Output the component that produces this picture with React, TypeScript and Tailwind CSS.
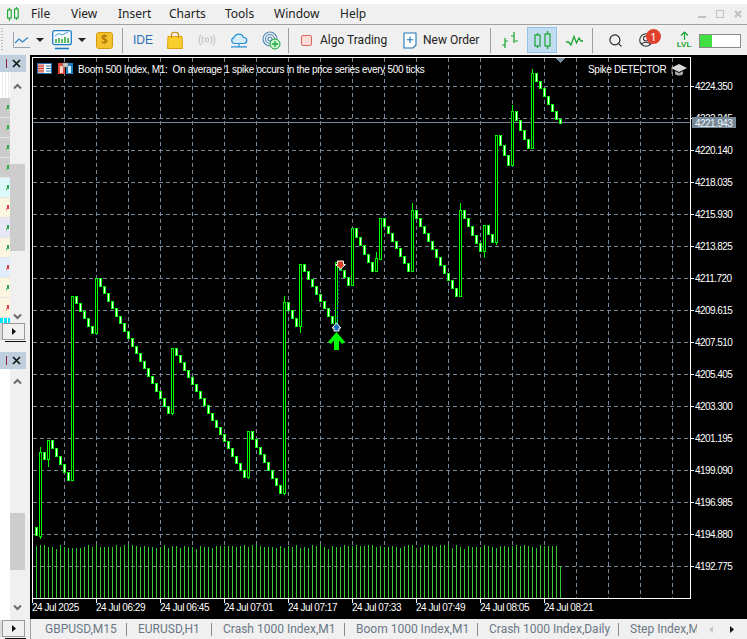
import React from 'react';
import { Search } from 'lucide-react';

const ui = { fontFamily: '"Noto Sans", sans-serif' };
const narrow = { fontFamily: 'Roboto, sans-serif' };
const chartFont = '"Liberation Sans", sans-serif';

// [x, top, bottom, wickTop, wickBottom]
const spikes: number[][] = [
  [40, 452, 536, 447, 539],
  [48, 440, 459, 440, 467],
  [72, 296, 480, 296, 480],
  [96, 278, 333, 278, 333],
  [172, 348, 413, 348, 415],
  [248, 431, 477, 431, 479],
  [284, 302, 493, 296, 495],
  [300, 264, 326, 264, 333],
  [336, 262, 323, 262, 323],
  [352, 228, 285, 228, 285],
  [376, 258, 271, 252, 271],
  [380, 218, 259, 218, 259],
  [412, 210, 271, 203, 271],
  [460, 210, 296, 203, 296],
  [484, 225, 251, 225, 258],
  [496, 135, 242, 135, 245],
  [512, 111, 165, 105, 165],
  [532, 73, 148, 69, 148],
];

const bears: number[][] = [[36, 527, 535]];
spikes.forEach((s, i) => {
  const next = spikes[i + 1];
  const endX = next ? next[0] - 4 : 556;
  const endY = next ? next[2] : 119;
  const n = Math.round((endX - s[0]) / 4);
  for (let k = 0; k < n; k++) {
    const step = (endY - s[1]) / n;
    bears.push([s[0] + 4 + k * 4, s[1] + k * step, s[1] + (k + 1) * step]);
  }
});
bears.push([560, 119, 123]);

const volumeOffsets =
  '1002240233332020222202000121223203113122412231111121020012223131203230102412201101100212212310042001200030241222012311210101230';

const prices = [
  ['4224.350', 86], ['4222.245', 118], ['4220.140', 150], ['4218.035', 182], ['4215.930', 214], ['4213.825', 246],
  ['4211.720', 278], ['4209.615', 310], ['4207.510', 342], ['4205.405', 374], ['4203.300', 406], ['4201.195', 438],
  ['4199.090', 470], ['4196.985', 502], ['4194.880', 534], ['4192.775', 566],
] as [string, number][];

const times = ['24 Jul 2025', '24 Jul 06:29', '24 Jul 06:45', '24 Jul 07:01', '24 Jul 07:17', '24 Jul 07:33', '24 Jul 07:49', '24 Jul 08:05', '24 Jul 08:21'];

const menu = [
  ['File', 'w-[40px]'], ['View', 'w-[47px]'], ['Insert', 'w-[51px]'], ['Charts', 'w-[56px]'],
  ['Tools', 'w-[49px]'], ['Window', 'w-[66px]'], ['Help', 'w-[40px]'],
];

const tabs = [
  ['GBPUSD,M15', 'w-[96px]'], ['EURUSD,H1', 'w-[85px]'], ['Crash 1000 Index,M1', 'w-[133px]'],
  ['Boom 1000 Index,M1', 'w-[133px]'], ['Crash 1000 Index,Daily', 'w-[141px]'],
];

const Chevron = ({ up }: { up?: boolean }) => (
  <svg width="9" height="7" viewBox="0 0 9 7" className={up ? '' : 'rotate-180'}>
    <path d="M1 5.500 4.500 2 8 5.500" fill="none" stroke="#6b6b6b" strokeWidth="2" />
  </svg>
);

const PanelHeader = () => (
  <div className="h-[17px] w-[26px] bg-[#bfcfde] flex items-center justify-end gap-[5px] pr-[5px] shrink-0">
    <div className="w-px h-[9px] bg-[#8a1f3a]" />
    <svg width="9" height="9" viewBox="0 0 9 9"><path d="M1 1 8 8M8 1 1 8" stroke="#111" strokeWidth="1.600" /></svg>
  </div>
);

const HScroll = () => (
  <div className="h-[19px] w-[26px] ml-[2px] relative shrink-0">
    <div className="h-[17px] w-[23px] border border-[#9a9a9a] bg-[#f0f0f0] shadow-[-3px_0_0_#dcdcdc] flex items-center justify-center">
      <svg width="4" height="7" viewBox="0 0 4 7"><path d="M0 0 4 3.500 0 7Z" fill="#111" /></svg>
    </div>
    <div className="absolute left-[3px] bottom-0 w-[21px] h-px bg-[#111]" />
  </div>
);

const rowColors = [
  'bg-[#cccccc]', 'bg-[#cccccc]', 'bg-[#cccccc]', 'bg-[#cccccc]', 'bg-[#dcf8fa]', 'bg-[#fcf5e0]',
  'bg-[#e6e8f7]', 'bg-[#fcf5e0]', 'bg-[#e2eefb]', 'bg-[#fcf5e0]', 'bg-[#fcf5e0]',
];

const LeftColumn = () => (
  <div className="w-[30px] shrink-0 bg-[#f0f0f0] flex flex-col">
    <PanelHeader />
    <div className="h-[251px] flex shrink-0">
      <div className="w-[10px] flex flex-col">
        <div className="h-[26px] bg-[repeating-linear-gradient(90deg,#ffffff_0px,#ffffff_2px,#ececec_2px,#ececec_3px)]" />
        {rowColors.map((c, i) => (
          <div key={i} className={`h-[20px] relative ${c} border-b border-[#e4e4e4]`}>
            <div className={`absolute right-[1px] top-[7px] w-[2px] h-[4px] ${i === 5 || i === 8 || i === 10 ? 'bg-[#d84040]' : 'bg-[#2ea84a]'}`} />
            <div className={`absolute right-[3px] top-[10px] w-px h-[3px] ${i === 5 || i === 8 || i === 10 ? 'bg-[#e89a9a]' : 'bg-[#7cc98e]'}`} />
          </div>
        ))}
        <div className="h-[5px] bg-[repeating-linear-gradient(90deg,#00e5ff_0px,#00e5ff_3px,#ffffff_3px,#ffffff_4px)]" />
      </div>
      <div className="flex-1 flex flex-col pr-[5px]">
        <div className="h-[26px] pt-[11px] flex justify-center"><Chevron up /></div>
        <div className="mt-[66px] h-[87px] bg-[#cdcdcd]" />
        <div className="mt-[62px] flex justify-center"><Chevron /></div>
      </div>
    </div>
    <HScroll />
    <div className="h-[10px] shrink-0" />
    <PanelHeader />
    <div className="flex-1 flex min-h-0">
      <div className="w-[10px] bg-white" />
      <div className="flex-1 flex flex-col pr-[5px]">
        <div className="pt-[9px] flex justify-center"><Chevron up /></div>
        <div className="mt-[128px] h-[57px] bg-[#cdcdcd]" />
        <div className="mt-[34px] flex justify-center"><Chevron /></div>
      </div>
    </div>
    <HScroll />
  </div>
);

const Sep = ({ cls }: { cls: string }) => <div className={`w-px h-[25px] bg-[#a0a0a0] shrink-0 ${cls}`} />;

const Caret = ({ cls }: { cls: string }) => (
  <svg width="8" height="4" viewBox="0 0 8 4" className={`shrink-0 ${cls}`}><path d="M0 0H8L4 4Z" fill="#222" /></svg>
);

const Toolbar = () => (
  <div className="h-[30px] bg-[#f0f0f0] flex items-center shrink-0 text-[#222]" style={ui}>
    <div className="w-[2px] h-[24px] ml-[1px] shrink-0 bg-[repeating-linear-gradient(180deg,#bdbdbd_0px,#bdbdbd_1px,transparent_1px,transparent_3px)]" />
    {/* line chart */}
    <svg width="17" height="16" viewBox="0 0 17 16" className="ml-[10px] shrink-0">
      <path d="M.5 0V15.500H17" fill="none" stroke="#9aa5b1" />
      <path d="M2 11 6 7l3.500 3L15 5.500" fill="none" stroke="#2f86c9" strokeWidth="1.200" />
    </svg>
    <Caret cls="ml-[6px]" />
    {/* chart monitor */}
    <svg width="20" height="20" viewBox="0 0 20 20" className="ml-[8px] shrink-0">
      <rect x=".7" y=".7" width="18.600" height="14" rx="2" fill="#f7fbfe" stroke="#1f7fc4" strokeWidth="1.300" />
      <path d="M3 6 7 3.500l3 1.500 6-3" fill="none" stroke="#4a9fd8" />
      <path d="M4 13V9M7 13V8M10 13V9M13 13V7M16 13V8" stroke="#29a82f" strokeWidth="1.500" />
      <path d="M3 18.500H17" stroke="#1f7fc4" strokeWidth="1.600" />
    </svg>
    <Caret cls="ml-[6px]" />
    {/* signals */}
    <div className="ml-[10px] w-[17px] h-[17px] rounded-[3px] bg-[#f4c430] border border-[#d99a10] flex items-center justify-center text-[12px] font-bold text-[#b87a08] shrink-0">$</div>
    <Sep cls="ml-[9px]" />
    <div className="ml-[10px] w-[19px] text-[12px] leading-none text-[#2a70b8] shrink-0" style={{ fontFamily: chartFont }}>IDE</div>
    {/* market bag */}
    <svg width="16" height="18" viewBox="0 0 16 18" className="ml-[15px] shrink-0">
      <path d="M1 5.500H15L15.500 17.500H.5Z" fill="#f8cf2c" stroke="#e0a010" />
      <path d="M4.500 7V3.500C4.500 .5 11.500 .5 11.500 3.500V7" fill="none" stroke="#c98a10" strokeWidth="1.200" />
    </svg>
    {/* signal (disabled) */}
    <svg width="18" height="12" viewBox="0 0 18 12" className="ml-[15px] shrink-0" fill="none" stroke="#c4c4c4" strokeWidth="1.200">
      <circle cx="9" cy="6" r="1.800" />
      <path d="M5.500 2.500a5 5 0 0 0 0 7M12.500 2.500a5 5 0 0 1 0 7M3 .8a8 8 0 0 0 0 10.400M15 .8a8 8 0 0 1 0 10.400" />
    </svg>
    {/* cloud */}
    <svg width="18" height="15" viewBox="0 0 18 15" className="ml-[14px] shrink-0">
      <path d="M4.500 10.500A3 3 0 0 1 4 4.600 5 5 0 0 1 13.500 4.500 3 3 0 0 1 14 10.500Z" fill="#d5ecfb" stroke="#2a8fd0" strokeWidth="1.200" />
      <path d="M9 10.500V13.500M1 13.800H17" stroke="#2a8fd0" strokeWidth="1.200" />
    </svg>
    {/* vps */}
    <svg width="19" height="19" viewBox="0 0 19 19" className="ml-[14px] shrink-0">
      <g fill="none" stroke="#4e89b5" strokeWidth="1.100">
        <circle cx="8" cy="8" r="7" />
        <circle cx="8" cy="8" r="4.500" />
        <circle cx="8" cy="8" r="2" />
      </g>
      <circle cx="13" cy="13" r="5" fill="#c7f5cd" stroke="#1fa53a" />
      <path d="M13 10V16M10 13H16" stroke="#1fa53a" strokeWidth="1.300" />
    </svg>
    <Sep cls="ml-[7px]" />
    <div className="ml-[12px] w-[11px] h-[11px] rounded-[2px] bg-[#fbdcd8] border border-[#d9675c] shrink-0" />
    <div className="ml-[8px] w-[83px] text-[12px] shrink-0 whitespace-nowrap" style={narrow}>Algo Trading</div>
    <svg width="14" height="17" viewBox="0 0 14 17" className="shrink-0">
      <path d="M1 1H13V13L10 16H1Z" fill="#fff" stroke="#2477b5" strokeWidth="1.100" />
      <path d="M7 4.500V11M3.800 7.800H10.200" stroke="#2477b5" strokeWidth="1.100" />
    </svg>
    <div className="ml-[6px] w-[67px] text-[12px] shrink-0 whitespace-nowrap" style={narrow}>New Order</div>
    <Sep cls="" />
    {/* bars */}
    <svg width="18" height="18" viewBox="0 0 18 18" className="ml-[10px] shrink-0" stroke="#16a52e" strokeWidth="1.200" fill="none">
      <path d="M4 7V17M1 14H4M4 10H7M13 1V12M10 5H13M13 10H17" />
    </svg>
    {/* candles, selected */}
    <div className="ml-[8px] w-[30px] h-[26px] bg-[#c3dcf0] border border-[#8fc3ea] flex items-center justify-center shrink-0">
      <svg width="17" height="18" viewBox="0 0 17 18" stroke="#16a52e" strokeWidth="1.200" fill="none">
        <path d="M3.500 2V4M3.500 15V17M13.500 0V3M13.500 15V18" />
        <rect x="1" y="4" width="5" height="11" />
        <rect x="11" y="3" width="5" height="12" />
      </svg>
    </div>
    {/* line */}
    <svg width="17" height="11" viewBox="0 0 17 11" className="ml-[9px] shrink-0" fill="none" stroke="#16a52e" strokeWidth="1.300">
      <path d="M0 7H2.500L5 10 8 1.500 10.500 8 13 3 15 6H17" />
    </svg>
    <Sep cls="ml-[9px]" />
    <Search size={15} strokeWidth={1.800} className="ml-[15px] shrink-0 text-[#222]" />
    {/* profile + badge */}
    <div className="ml-[16px] relative w-[14px] h-[14px] shrink-0">
      <svg width="14" height="14" viewBox="0 0 14 14" fill="none" stroke="#333" strokeWidth="1.100">
        <circle cx="7" cy="7" r="6.300" />
        <circle cx="7" cy="5.500" r="2.500" />
        <path d="M2.500 11.500C4 8.500 10 8.500 11.500 11.500" />
      </svg>
      <div className="absolute -top-[4px] left-[7px] w-[15px] h-[15px] rounded-full bg-[#e0402c] text-white text-[11px] leading-[15px] text-center">1</div>
    </div>
    {/* level */}
    <div className="ml-[24px] w-[14px] h-[18px] flex flex-col items-center shrink-0">
      <svg width="9" height="9" viewBox="0 0 9 9" fill="none" stroke="#16a52e" strokeWidth="1.200"><path d="M4.500 9V1M1 4.500 4.500 1 8 4.500" /></svg>
      <div className="text-[8px] leading-[9px] font-semibold text-[#16a52e]" style={{ fontFamily: chartFont }}>LVL</div>
    </div>
    <div className="ml-[8px] mt-[1px] w-[42px] h-[14px] border border-[#8a8a8a] bg-white shrink-0 flex">
      <div className="w-[12px] bg-[#3fe03f]" />
    </div>
  </div>
);

const Chart = () => (
  <svg width="717" height="564" viewBox="30 55 717 564" className="block shrink-0" shapeRendering="crispEdges" style={{ fontFamily: chartFont }}>
    <rect x="30" y="55" width="717" height="564" fill="#000" />
    {/* grid */}
    {prices.map(([, y]) => (
      <line key={y} x1="33" x2="690" y1={y + 0.5} y2={y + 0.5} stroke="#778899" strokeDasharray="4 3" />
    ))}
    {Array.from({ length: 20 }, (_, i) => 64 + i * 32).map((x) => (
      <line key={x} x1={x + 0.5} x2={x + 0.5} y1="58" y2="598" stroke="#778899" strokeDasharray="4 3" />
    ))}
    <line x1="33" x2="690" y1="122.500" y2="122.500" stroke="#778899" />
    {/* frame */}
    <rect x="32.500" y="57.500" width="658" height="541" fill="none" stroke="#fff" />
    {/* volumes */}
    {bears.concat(spikes).map((c) => {
      const idx = (c[0] - 36) / 4;
      const top = c[0] === 560 ? 566 : 545 + Number(volumeOffsets[idx] ?? 1);
      return <line key={c[0]} x1={c[0] + 0.5} x2={c[0] + 0.5} y1={top} y2="598" stroke="#32cd32" />;
    })}
    {/* candles */}
    {spikes.map((s) => (
      <g key={s[0]}>
        <line x1={s[0] + 0.5} x2={s[0] + 0.5} y1={s[3]} y2={s[4]} stroke="#00ff00" />
        <rect x={s[0] - 0.5} y={s[1] + 0.5} width="2" height={s[2] - s[1]} fill="#000" stroke="#00ff00" />
      </g>
    ))}
    {bears.map((b) => (
      <rect key={b[0]} x={b[0] - 0.5} y={Math.round(b[1]) + 0.5} width="2" height={Math.max(2, Math.round(b[2]) - Math.round(b[1]))} fill="#fff" stroke="#00ff00" />
    ))}
    {/* ask marker */}
    <path d="M556 58H565L560.500 63Z" fill="#778899" />
    <g shapeRendering="auto">
      <line x1="336.500" y1="327" x2="340.500" y2="263" stroke="#1e5fa8" strokeDasharray="2 2" />
      <path d="M340.500 269 335.500 264.500H337.500V261H343.500V264.500H345.500Z" fill="#d8401f" stroke="#fff" />
      <path d="M336.500 323 332 328H334V331H339V328H341Z" fill="#1e6fb8" stroke="#fff" />
      <path d="M336.500 332 328 342 331 344 334 340.500V350H339V340.500L342 344 345 342Z" fill="#00ff00" />
    </g>
    {/* price axis */}
    {prices.map(([p, y]) => (
      <g key={p}>
        <line x1="690" x2="694" y1={y + 0.5} y2={y + 0.5} stroke="#fff" />
        <text x="695" y={y + 4} fill="#fff" fontSize="10" letterSpacing="-0.55">{p}</text>
      </g>
    ))}
    <rect x="692" y="117" width="44" height="11" fill="#778899" />
    <text x="695" y="126.500" fill="#eef2f6" fontSize="10" letterSpacing="-0.55">4221.943</text>
    {/* time axis */}
    {times.map((t, i) => (
      <g key={t}>
        <line x1={32.5 + i * 64} x2={32.5 + i * 64} y1="598" y2="603" stroke="#fff" />
        <text x={32 + i * 64} y="611" fill="#fff" fontSize="10" letterSpacing="-0.45">{t}</text>
      </g>
    ))}
    {/* title */}
    <g shapeRendering="auto">
      <rect x="37.500" y="63.500" width="14" height="10" fill="#fff" stroke="#1f6fb0" />
      <path d="M38 64H44V73H38Z" fill="#e8b0a8" />
      <path d="M38 66H44M38 68.500H44M38 71H44" stroke="#d9402c" />
      <path d="M46 66H51M46 68.500H51M46 71H51" stroke="#1f6fb0" />
      <rect x="58" y="63" width="7" height="11" fill="#e14a3a" />
      <rect x="66" y="63" width="7" height="11" fill="#1f7fc4" />
      <rect x="60" y="66" width="3" height="7" fill="#fbd5d0" />
      <rect x="68" y="66" width="3" height="7" fill="#d5ecfb" />
      <rect x="63" y="63" width="5" height="4" fill="#ccc" stroke="#888" strokeWidth=".6" />
    </g>
    <text x="78" y="73" fill="#fff" fontSize="10" letterSpacing="-0.29" xmlSpace="preserve">Boom 500 Index, M1:  On average 1 spike occurs in the price series every 500 ticks</text>
    <text x="588" y="73" fill="#fff" fontSize="10" letterSpacing="-0.3">Spike DETECTOR</text>
    <g shapeRendering="auto">
      <path d="M679 64 687 68 679 72 671 68Z" fill="#d8d8d8" />
      <path d="M675 71V74C677 76 681 76 683 74V71L679 73Z" fill="#a8a8a8" />
      <path d="M672 68V74" stroke="#999" />
    </g>
  </svg>
);

const Tabs = () => (
  <div className="h-[20px] bg-[#f0f0f0] border-l border-[#a0a0a0] flex items-center shrink-0 overflow-hidden text-[12px] text-[#6a7887] whitespace-nowrap" style={narrow}>
    {tabs.map(([t, w]) => (
      <div key={t} className={`${w} h-[13px] pl-[11px] first:pl-[14px] border-r border-[#8a8a8a] flex items-center shrink-0`}>{t}</div>
    ))}
    <div className="w-[67px] ml-[11px] overflow-hidden shrink-0">Step Index,M1</div>
    <svg width="4" height="7" viewBox="0 0 4 7" className="ml-[12px] shrink-0"><path d="M4 0 0 3.500 4 7Z" fill="#c8c8c8" /></svg>
    <svg width="4" height="7" viewBox="0 0 4 7" className="ml-[17px] shrink-0"><path d="M0 0 4 3.500 0 7Z" fill="#111" /></svg>
  </div>
);

export default function App() {
  return (
    <div className="w-[747px] h-[639px] overflow-hidden bg-white flex flex-col">
      <div className="h-[4px] bg-white shrink-0" />
      <div className="h-[20px] bg-[#f0f0f0] flex items-center shrink-0 text-[12px] text-[#222] relative" style={ui}>
        <svg width="12" height="14" viewBox="0 0 12 14" className="ml-[7px] mr-[12px] shrink-0" fill="none" stroke="#16a52e" strokeWidth="1.100">
          <rect x=".6" y="3" width="3.600" height="8" />
          <rect x="7.600" y="2" width="3.600" height="9" />
          <path d="M2.400 1V3M2.400 11V14M9.400 0V2M9.400 11V13" />
        </svg>
        {menu.map(([m, w]) => (
          <div key={m} className={`${w} shrink-0`}>{m}</div>
        ))}
        <div className="ml-auto flex items-center gap-[10px] pr-[5px]">
          <div className="w-[8px] h-[2px] mt-[5px] bg-[#c0c0c0]" />
          <div className="w-[8px] h-[8px] border border-[#c0c0c0]" />
          <svg width="8" height="8" viewBox="0 0 8 8"><path d="M1 1 7 7M7 1 1 7" stroke="#c0c0c0" strokeWidth="2" /></svg>
        </div>
      </div>
      <div className="h-px bg-[#a0a0a0] shrink-0" />
      <Toolbar />
      <div className="flex-1 flex min-h-0">
        <LeftColumn />
        <div className="flex flex-col w-[717px]">
          <Chart />
          <Tabs />
        </div>
      </div>
    </div>
  );
}
